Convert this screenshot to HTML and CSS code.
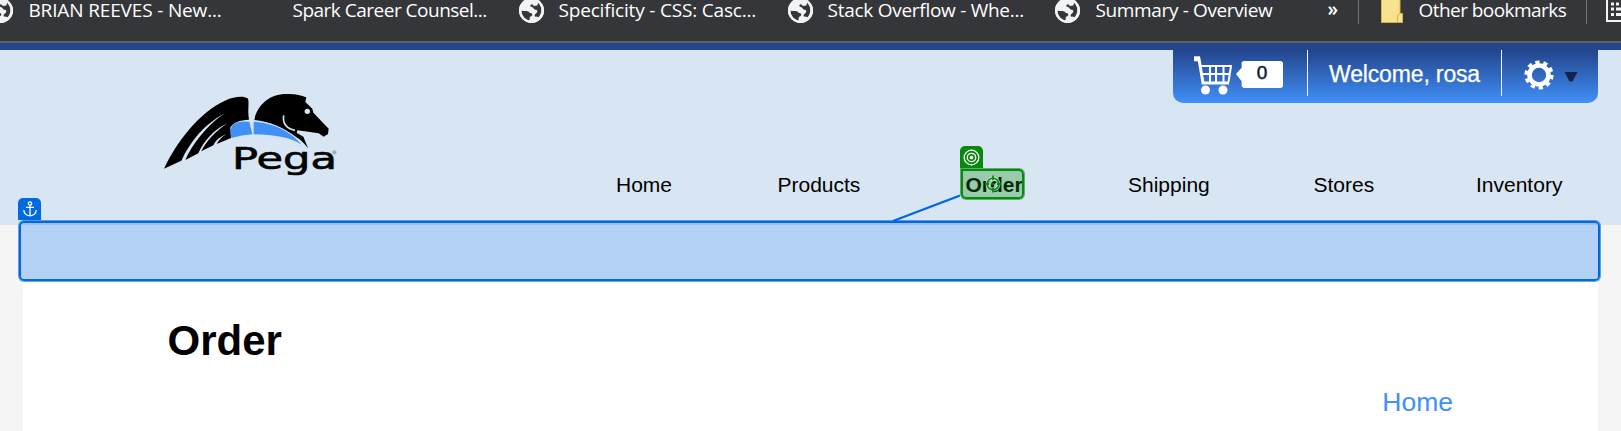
FILE: index.html
```html
<!DOCTYPE html>
<html lang="en">
<head>
<meta charset="utf-8">
<title>Order</title>
<link rel="stylesheet" href="styles.css">
</head>
<body>
<svg class="defs" width="0" height="0">
  <symbol id="globe" viewBox="0 0 24 24">
    <circle cx="12" cy="12" r="12" fill="#f1f3f4"/>
    <path d="M2.300 12.300C5 12.600 8.500 11.800 9.800 13.600C10.300 14.800 12.600 14 12.800 15.800C12.900 17.300 10.600 17.400 10.200 19V21.500C5.500 21 2.300 17 2.300 12.300Z" fill="#35363a"/>
    <path d="M14.500 2.500C14.800 5.300 13.800 6 11.800 6.200C10.300 6.400 10.600 8.500 12.200 8.600C14.200 8.800 14 11.200 16 11.400C17.500 11.500 18 12.600 17.200 13.800C16.500 15 14.800 15.200 15 17C15.200 18.600 17.600 17.600 18.800 18.600C23.500 13.500 22 4.500 14.500 2.500Z" fill="#35363a"/>
    <path d="M14 1L18.500 4L17.600 7.200L14.200 7.600L12.500 5.500Z" fill="#f1f3f4"/>
    <circle cx="12" cy="12" r="10.900" fill="none" stroke="#f1f3f4" stroke-width="2.200"/>
  </symbol>
</svg>
<div class="bookmarks">
  <div class="bookmark b1"><svg class="globe"><use href="#globe"/></svg><span>BRIAN REEVES - New...</span></div>
  <div class="bookmark b2"><span>Spark Career Counsel...</span></div>
  <div class="bookmark b3"><svg class="globe"><use href="#globe"/></svg><span>Specificity - CSS: Casc...</span></div>
  <div class="bookmark b4"><svg class="globe"><use href="#globe"/></svg><span>Stack Overflow - Whe...</span></div>
  <div class="bookmark b5"><svg class="globe"><use href="#globe"/></svg><span>Summary - Overview</span></div>
  <div class="more">»</div>
  <div class="other">
    <svg width="22" height="24" viewBox="0 0 22 24"><path d="M.5-2h18.500v15.500h2.500v9H.5z" fill="#f9e28d" stroke="#d6b340"/><path d="M16.500 22.500v-6.500q0-2 2.500-2" fill="none" stroke="#d6b340"/></svg>
    <span>Other bookmarks</span>
  </div>
  <div class="reading">
    <svg width="15" height="24" viewBox="0 0 15 24"><path d="M15 21H1V-2" fill="none" stroke="#f1f3f4" stroke-width="2"/><path d="M5 4h3M10 4h3M5 9h3M10 9h5M5 14.500h3M10 14.500h5" stroke="#f1f3f4" stroke-width="3"/></svg>
  </div>
</div>

<header class="header">
  <svg class="logo" viewBox="0 0 600 330">
    <path d="M42 266C80 185 150 95 225 62C255 48 282 48 293 55C299 65 292 88 297 119C270 120 248 128 241 143L243 174L200 192C208 178 218 168 230 162C205 172 195 185 190 196L154 214C168 185 195 155 232 130C190 150 160 185 145 220L106 240C125 195 170 135 226 99C165 130 120 185 94 242Z"/>
    <path d="M313 120C322 72 362 41 412 42C438 42 455 47 469 52L466 66L487 86L490 98L536 146L534 162L521 170L506 160L464 154L442 151L440 158L460 170L474 204C463 192 455 180 438 171C400 142 360 125 313 120Z"/>
    <path d="M401 106C397 130 410 147 435 151" fill="none" stroke="#d8e6f3" stroke-width="5"/>
    <circle cx="472" cy="94" r="8" fill="#d8e6f3"/>
    <path d="M244 174C239 145 244 131 264 127Q280 123 298 125L307 163Q275 165 244 174Z" fill="#4090f8"/>
    <path d="M311 125C365 128 420 151 455 194C420 171 370 164 311 163Z" fill="#4090f8"/>
    <text class="wordmark" x="246" y="266" textLength="315" lengthAdjust="spacingAndGlyphs">Pega</text>
    <circle cx="553" cy="217" r="6" fill="#a2a9af" stroke="#bcc7d1" stroke-width="3"/>
  </svg>
  <div class="header-main">
    <div class="panel">
      <div class="cart">
        <svg width="38" height="39" viewBox="0 0 38 39" fill="none" stroke="#fff"><path d="M0 3H5L9 27H35" stroke-width="3"/><path d="M0 2.800H6" stroke-width="5"/><path d="M7 10H37L34.500 26M8 18H36M16 10V27M22 10V27M29.500 10V27" stroke-width="2"/><circle cx="11.500" cy="34" r="4.500" fill="#fff" stroke="none"/><circle cx="29" cy="34" r="4.500" fill="#fff" stroke="none"/></svg>
        <span class="count">0</span>
      </div>
      <div class="welcome">Welcome, rosa</div>
      <div class="settings">
        <svg class="gear" width="30" height="30" viewBox="-15 -15 30 30"><circle r="9.500" fill="none" stroke="#fff" stroke-width="4.600"/><circle r="12.800" fill="none" stroke="#fff" stroke-width="3.600" stroke-dasharray="4.200 3.840"/></svg>
        <svg class="caret" width="14" height="12" viewBox="0 0 14 12"><path d="M.5 1H13.500L8.500 10.500H5.500Z" fill="#14234b"/></svg>
      </div>
    </div>
    <nav class="nav"><a>Home</a><a>Products</a><a class="current">Order</a><a>Shipping</a><a>Stores</a><a>Inventory</a></nav>
  </div>
</header>

<main class="content">
  <h1>Order</h1>
  <a class="crumb">Home</a>
</main>

<div class="anchor-box"></div>
<div class="anchor-tab"><svg width="14" height="16" viewBox="0 0 14 16" fill="none" stroke="#fff" stroke-width="1.300"><circle cx="7" cy="2.500" r="1.700"/><path d="M3 6.300H11M7 4.500V15M.8 9C1 12.500 3.500 14.600 7 14.800C10.500 14.600 13 12.500 13.200 9"/></svg></div>
<svg class="link-line" width="70" height="30"><path d="M3 27L70 1.500" stroke="#0068e0" stroke-width="2.200"/></svg>
<div class="target-tab"><svg width="17" height="17" viewBox="0 0 17 17" fill="none" stroke="#fff" stroke-width="1.300"><circle cx="8.500" cy="8.500" r="7.300"/><circle cx="8.500" cy="8.500" r="4.200"/><circle cx="8.500" cy="8.500" r="1.200" fill="#fff"/></svg></div>
<div class="target-box"><svg width="16" height="18" viewBox="0 0 16 18" fill="none"><circle cx="8" cy="9" r="5.500" stroke="#d5ead9" stroke-opacity=".7" stroke-width="4"/><circle cx="8" cy="9" r="5.800" stroke="#078a0b" stroke-width="1.500"/><path d="M8 .5V5M8 13V17.500M0 9H4M12 9H16" stroke="#078a0b" stroke-width="1.800"/><circle cx="8" cy="9" r="1" fill="#078a0b"/></svg></div>
</body>
</html>
```
FILE: styles.css
```css
* { box-sizing: border-box; }
body {
  margin: 0;
  width: 1621px;
  height: 431px;
  overflow: hidden;
  background: #f5f5f5;
  color: #000;
  font-family: "Liberation Sans", Arial, sans-serif;
}
svg { display: block; flex: none; }
.defs { position: absolute; }

.bookmarks {
  display: flex;
  height: 43px;
  background: #35363a;
  border-bottom: 2px solid #5f6163;
  color: #fff;
  font: 19px/20px "Open Sans", "Noto Sans", sans-serif;
  white-space: nowrap;
}
.bookmark { display: flex; flex: none; }
.globe { width: 25px; height: 25px; margin: -2px 15px 0 0; }
.b1 { width: 305px; margin-left: -12.500px; letter-spacing: -.15px; }
.b1 .globe { margin-right: 16px; }
.b2 { width: 226px; letter-spacing: -.5px; }
.b3 { width: 269px; letter-spacing: -.18px; }
.b4 { width: 267px; letter-spacing: -.27px; }
.b5 { width: 273px; letter-spacing: -.36px; }
.b5 .globe { margin-right: 16px; }
.more { flex: none; width: 30px; font-size: 19px; font-weight: 600; line-height: 19px; }
.other { display: flex; flex: none; width: 228px; height: 24px; padding-left: 22px; gap: 16px; border-left: 1px solid #707276; letter-spacing: -.55px; }
.reading { flex: none; height: 24px; padding-left: 19px; border-left: 1px solid #707276; }

.header {
  display: flex;
  height: 182px;
  background: #d8e6f3;
  border-top: 7px solid #24468e;
}
.logo { width: 200px; height: 110px; margin: 30px 266px 0 150px; }
.wordmark { font: 93px "DejaVu Sans", sans-serif; fill: #050505; stroke: #050505; stroke-width: 2px; }
.header-main { flex: 1; min-width: 0; }
.panel {
  display: flex;
  width: 425px;
  height: 60px;
  margin: -7px 23px 0 auto;
  padding-top: 7px;
  border-radius: 0 0 10px 10px;
  background: linear-gradient(#24468e 8px, #4090f8 100%);
  color: #fff;
}
.cart { display: flex; flex: none; width: 135px; height: 46px; padding: 6px 0 0 21px; border-right: 1px solid #fff; }
.count {
  width: 47px;
  height: 27px;
  margin: 5px 0 0 4px;
  padding-left: 5px;
  background: #fff;
  clip-path: polygon(0 48%, 12% 25%, 12% 5%, 16% 0, 96% 0, 100% 6%, 100% 94%, 96% 100%, 16% 100%, 12% 94%, 12% 75%);
  color: #101838;
  font-size: 19px;
  line-height: 23px;
  text-align: center;
  -webkit-text-stroke: .5px #101838;
}
.welcome { flex: none; width: 194px; height: 46px; padding: 11px 0 0 21px; border-right: 1px solid #fff; font-size: 23px; line-height: 26px; letter-spacing: -.15px; white-space: nowrap; -webkit-text-stroke: .25px #fff; }
.settings { display: flex; padding-left: 22px; gap: 10px; }
.gear { margin-top: 10px; }
.caret { margin-top: 21px; }

.nav {
  display: grid;
  grid-template-columns: 161.500px 188px 162.500px 185.500px 162.500px 1fr;
  margin-top: 70px;
  font-size: 21px;
  line-height: 24px;
}
.current { font-weight: bold; }

.content {
  display: flex;
  justify-content: space-between;
  height: 206px;
  margin: 0 23px;
  padding: 91px 145px 0 144.500px;
  background: #fff;
}
h1 { margin: 1px 0 0; font-size: 42px; line-height: 48px; }
.crumb { margin-top: 71px; color: #4090f8; font-size: 26.500px; line-height: 30px; }

.anchor-box {
  position: absolute;
  left: 19px;
  top: 221px;
  width: 1581px;
  height: 60px;
  border: 2px solid #0068e0;
  border-radius: 5px;
  box-shadow: 0 0 0 1px rgba(0, 104, 224, .6);
  background: linear-gradient(#9cc0eb 2px, #b3d2f5 2px) padding-box;
}
.anchor-tab, .target-tab {
  position: absolute;
  display: flex;
  justify-content: center;
  width: 23px;
  height: 22px;
  border-radius: 5px 5px 0 0;
}
.anchor-tab { left: 18px; top: 198px; padding-top: 3px; background: #0068e0; }
.link-line { position: absolute; left: 890px; top: 194px; }
.target-tab { left: 960px; top: 146px; padding-top: 3px; background: #078a0b; }
.target-box {
  position: absolute;
  left: 961px;
  top: 169px;
  width: 63px;
  height: 30px;
  padding: 4px 0 0 22px;
  border: 2px solid #078a0b;
  border-radius: 0 5px 5px 5px;
  box-shadow: 0 0 0 1px rgba(7, 138, 11, .6);
  background: rgba(7, 138, 11, .3);
}
```
